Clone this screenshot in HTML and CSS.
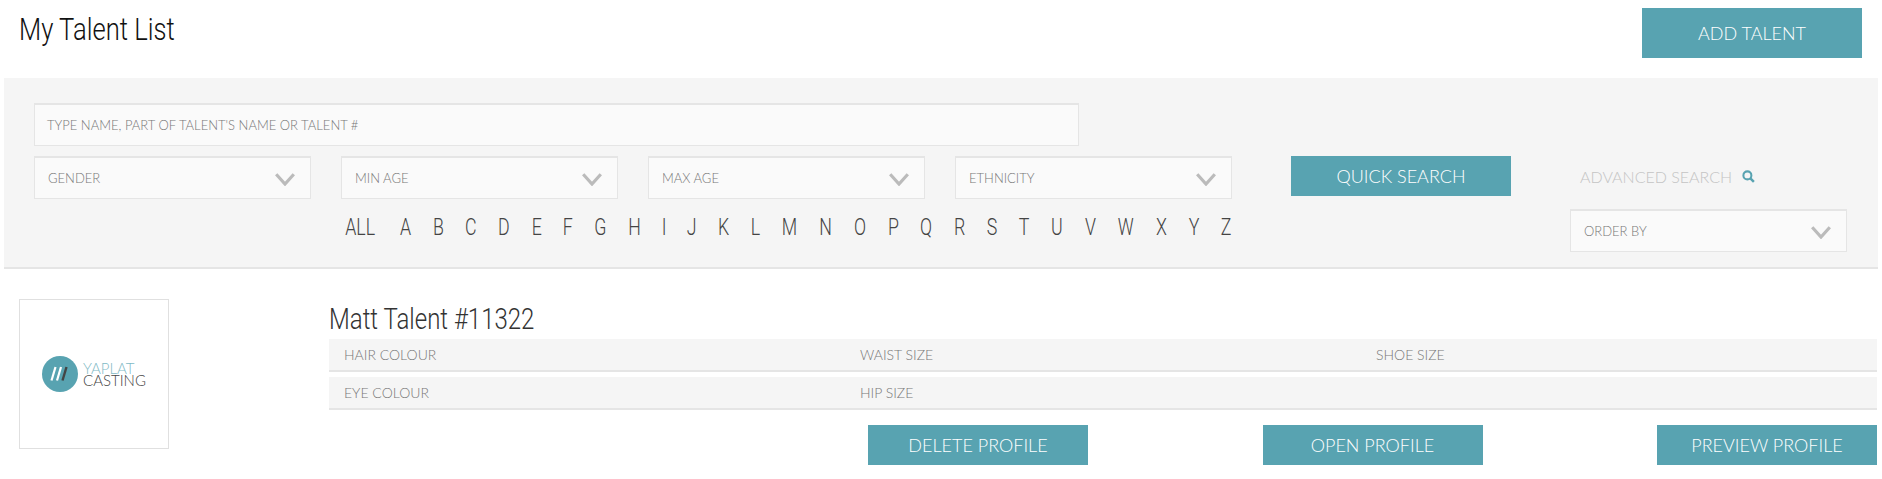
FILE: index.html
```html
<!DOCTYPE html>
<html lang="en">
<head>
<meta charset="utf-8">
<title>My Talent List</title>
<link rel="stylesheet" href="styles.css">
</head>
<body>
<svg class="sprite" width="0" height="0" aria-hidden="true"><symbol id="chev" viewBox="0 0 20 13"><path d="M1.2 1.2 10 11 18.8 1.2" fill="none" stroke="#bbb" stroke-width="3.2"/></symbol></svg>
<header class="top">
  <h1 class="title"><span class="cond">My Talent List</span></h1>
  <a class="btn btn-tall">ADD TALENT</a>
</header>
<section class="panel">
  <div class="filters">
    <div class="field field-wide">TYPE NAME, PART OF TALENT'S NAME OR TALENT #</div>
    <div class="selects">
      <div class="field select"><span>GENDER</span><svg class="chev"><use href="#chev"/></svg></div>
      <div class="field select"><span>MIN AGE</span><svg class="chev"><use href="#chev"/></svg></div>
      <div class="field select"><span>MAX AGE</span><svg class="chev"><use href="#chev"/></svg></div>
      <div class="field select"><span>ETHNICITY</span><svg class="chev"><use href="#chev"/></svg></div>
    </div>
    <nav class="alpha">
      <a>ALL</a><a>A</a><a>B</a><a>C</a><a>D</a><a>E</a><a>F</a><a>G</a><a>H</a><a>I</a><a>J</a><a>K</a><a>L</a><a>M</a><a>N</a><a>O</a><a>P</a><a>Q</a><a>R</a><a>S</a><a>T</a><a>U</a><a>V</a><a>W</a><a>X</a><a>Y</a><a>Z</a>
    </nav>
  </div>
  <a class="btn quick">QUICK SEARCH</a>
  <div class="side">
    <a class="adv">ADVANCED SEARCH
      <svg class="search" viewBox="0 0 14 14"><circle cx="5.8" cy="5.8" r="4.3" fill="none" stroke="#58a3b1" stroke-width="2.2"/><path d="M9 9 12.8 12.8" stroke="#58a3b1" stroke-width="2.6" fill="none"/></svg>
    </a>
    <div class="field select"><span>ORDER BY</span><svg class="chev"><use href="#chev"/></svg></div>
  </div>
</section>
<article class="card">
  <div class="photo">
    <svg class="mark" viewBox="0 0 36 36"><circle cx="18" cy="18" r="18" fill="#58a3b1"/><path d="M9.5 24.5 13.5 11" stroke="#fff" stroke-width="2.2"/><path d="M15 24.5 19 11" stroke="#fff" stroke-width="2.2"/><path d="M20.5 24.5 24.5 11" stroke="#444" stroke-width="2.4"/></svg>
    <div class="brand"><span class="brand-a">YAPLAT</span><span class="brand-b">CASTING</span></div>
  </div>
  <div class="info">
    <h2 class="name"><span class="cond">Matt Talent #11322</span></h2>
    <div class="row"><span>HAIR COLOUR</span><span>WAIST SIZE</span><span>SHOE SIZE</span></div>
    <div class="row"><span>EYE COLOUR</span><span>HIP SIZE</span><span></span></div>
    <div class="actions">
      <a class="btn">DELETE PROFILE</a>
      <a class="btn">OPEN PROFILE</a>
      <a class="btn">PREVIEW PROFILE</a>
    </div>
  </div>
</article>
</body>
</html>
```
FILE: styles.css
```css
* { box-sizing: border-box; }
html, body { margin: 0; padding: 0; background: #fff; height: 479px; overflow: hidden; }
body { font-family: Lato, "Liberation Sans", sans-serif; color: #777; }
.sprite { position: absolute; }
.cond { display: inline-block; transform-origin: 0 50%; font-family: Roboto, "Liberation Sans", sans-serif; font-weight: 300; white-space: nowrap; }
.top { display: flex; justify-content: space-between; padding: 8px 20px 20px 19px; height: 78px; }
.title { margin: 0; font-size: 32px; line-height: 40px; font-weight: 300; color: #111; }
.title .cond { transform: scaleX(.8); }
.btn { display: flex; align-items: center; justify-content: center; width: 220px; height: 40px; background: #58a3b1; color: #fff; font-family: Lato, sans-serif; font-weight: 300; font-size: 18px; }
.btn-tall { height: 50px; }
.panel { display: flex; align-items: flex-start; margin: 0 4px; height: 191px; padding: 25px 0 0 30px; background: #f5f5f5; border-bottom: 2px solid #e5e5e5; }
.filters { width: 1199px; }
.field { display: flex; align-items: center; height: 43px; background: #fafafa; border: 1px solid #e5e5e5; border-top-width: 2px; font-size: 13px; font-weight: 300; color: #777; }
.field-wide { width: 1045px; padding-left: 12px; margin-bottom: 10px; }
.selects { display: flex; gap: 30px; }
.select { width: 277px; padding: 0 15px 0 13px; justify-content: space-between; }
.chev { width: 20px; height: 13px; margin-top: 3px; }
.alpha { display: flex; justify-content: space-between; padding: 15px 0 0 306px; font-family: Roboto, sans-serif; font-weight: 300; font-size: 24px; line-height: 26px; color: #444; }
.alpha a { display: inline-block; transform: scaleX(.74); }
.quick { margin: 53px 0 0 58px; }
.side { width: 276px; margin: 53px 0 0 59px; }
.adv { display: flex; align-items: center; gap: 10px; height: 40px; margin-bottom: 13px; padding-left: 10px; font-size: 16px; font-weight: 300; color: #c4c4c4; }
.search { width: 13px; height: 13px; }
.card { display: flex; padding: 30px 5px 0 19px; }
.photo { display: flex; align-items: center; justify-content: center; gap: 5px; width: 150px; height: 150px; flex: none; border: 1px solid #e0e0e0; }
.mark { width: 36px; height: 36px; }
.brand { display: flex; flex-direction: column; line-height: 12px; font-weight: 300; font-size: 15px; }
.brand-a { color: #7fbac6; }
.brand-b { color: #444; }
.info { flex: 1; margin-left: 160px; }
.name { margin: 0; height: 40px; font-size: 30px; line-height: 36px; font-weight: 300; color: #333; }
.name .cond { transform: scaleX(.8); }
.row { display: grid; grid-template-columns: repeat(3, 1fr); align-items: center; height: 33px; margin-bottom: 5px; background: #f5f5f5; border-bottom: 2px solid #e5e5e5; font-size: 14px; font-weight: 300; color: #777; }
.row span { padding-left: 15px; }
.actions { display: flex; justify-content: flex-end; gap: 174.5px; margin-top: 15px; }
```
